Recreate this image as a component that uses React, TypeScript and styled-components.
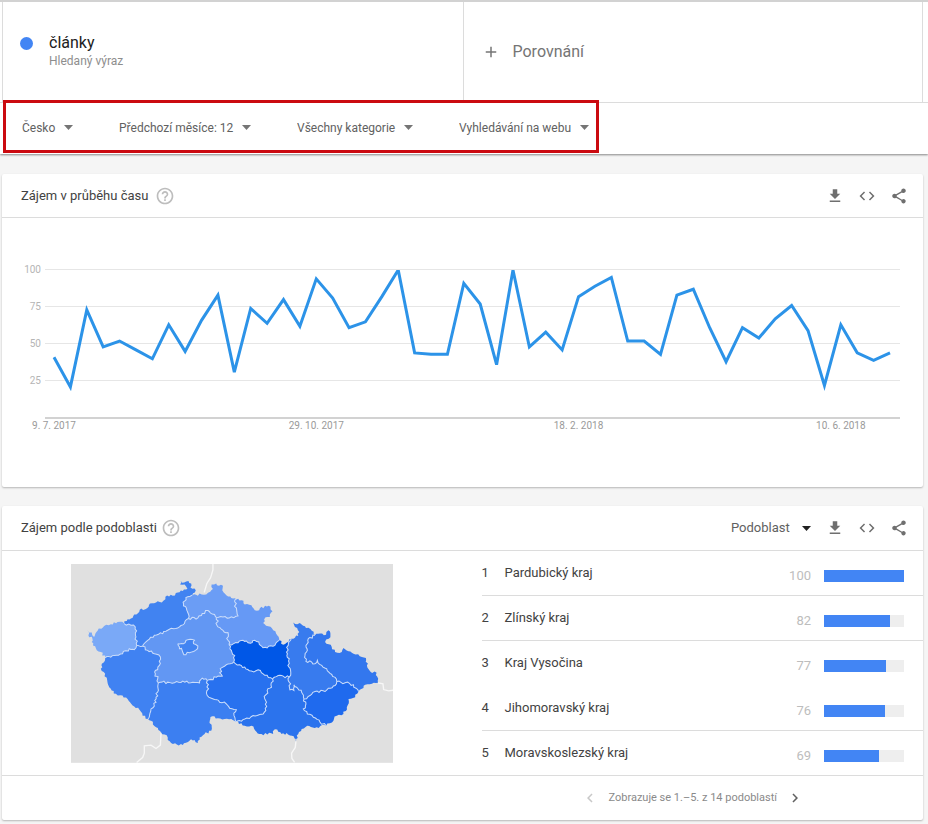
import React from "react";
import styled, { createGlobalStyle } from "styled-components";

const GlobalStyle = createGlobalStyle`
  *, *::before, *::after { box-sizing: border-box; }
  body {
    margin: 0;
    background: #f5f5f5;
    color: #424242;
    font-family: Roboto, "Liberation Sans", sans-serif;
    font-size: 13px;
    line-height: 16px;
  }
  button, select { font: inherit; color: inherit; }
`;

/* ---------- page parts ---------- */

const TopArea = styled.header`
  background: #fff;
  border-top: 2px solid #d2d2d2;
  box-shadow: 0 1px 2px rgba(0, 0, 0, 0.45);
`;

const TermRow = styled.div`
  display: grid;
  grid-template-columns: 1fr 1fr;
  padding: 0 5px 0 2px;
  border-bottom: 1px solid #dcdcdc;
`;

const Term = styled.div`
  display: flex;
  align-items: flex-start;
  gap: 16px;
  height: 100px;
  padding: 32px 17px 0;
  border-left: 1px solid #dcdcdc;
`;

const Dot = styled.span`
  width: 13px;
  height: 13px;
  margin-top: 3px;
  border-radius: 50%;
  background: #4285f4;
`;

const TermName = styled.h1`
  margin: 0;
  font-size: 16px;
  line-height: 18px;
  font-weight: 400;
  color: #212121;
`;

const TermKind = styled.p`
  margin: 0;
  font-size: 12px;
  line-height: 18px;
  color: #8e8e8e;
`;

const CompareButton = styled.button`
  display: flex;
  align-items: center;
  gap: 13px;
  height: 100px;
  padding: 0 18px;
  border: 0;
  border-left: 1px solid #dcdcdc;
  border-right: 1px solid #dcdcdc;
  background: none;
  color: #757575;
  font-size: 16px;
  cursor: pointer;
`;

const FilterBar = styled.div`
  display: flex;
  padding-left: 3px;
`;

const FilterGroup = styled.div`
  position: relative;
  display: flex;
  align-items: center;
  gap: 46px;
  height: 51px;
  padding: 0 10px 2px 19px;

  &::after {
    content: "";
    position: absolute;
    inset: -3px 0 1px;
    border: 3px solid #cb0a10;
    pointer-events: none;
  }
`;

const SelectBox = styled.label`
  display: grid;
  grid-template-columns: auto 9px;
  align-items: center;
`;

const Select = styled.select<{ $strong?: boolean }>`
  grid-area: 1 / 1 / 2 / 3;
  appearance: none;
  margin: 0;
  padding: 0 ${(p) => (p.$strong ? 21 : 17)}px 0 0;
  border: 0;
  background: none;
  color: #616161;
  font-size: ${(p) => (p.$strong ? 13 : 12)}px;
  line-height: 18px;
  cursor: pointer;
`;

const Arrow = styled.svg<{ $dark?: boolean }>`
  grid-area: 1 / 2;
  width: 9px;
  height: 5px;
  pointer-events: none;
  fill: ${(p) => (p.$dark ? "#212121" : "#757575")};
`;

const Main = styled.main`
  display: grid;
  gap: 19px;
  padding: 20px 5px 4px 2px;
`;

const Card = styled.section`
  border-radius: 2px;
  background: #fff;
  box-shadow: 0 1px 2px rgba(0, 0, 0, 0.26);
`;

const CardHead = styled.div<{ $tall?: boolean }>`
  display: flex;
  align-items: center;
  height: ${(p) => (p.$tall ? 45 : 44)}px;
  padding: 0 8px 0 19px;
  border-bottom: 1px solid #dcdcdc;
`;

const CardTitle = styled.h2`
  margin: 0;
  font-size: 13px;
  line-height: 16px;
  font-weight: 400;
  color: #424242;
`;

const IconButton = styled.button<{ $tone?: string; $size?: number }>`
  display: grid;
  place-items: center;
  width: ${(p) => p.$size ?? 32}px;
  height: ${(p) => p.$size ?? 32}px;
  padding: 0;
  border: 0;
  background: none;
  color: ${(p) => p.$tone ?? "#6f6f6f"};
  cursor: pointer;

  &:disabled { cursor: default; }
`;

const Icon = styled.svg<{ $size: number }>`
  width: ${(p) => p.$size}px;
  height: ${(p) => p.$size}px;
  fill: currentColor;
`;

const HeadActions = styled.div`
  display: flex;
  align-items: center;
  margin-left: auto;
`;

const SelectSlot = styled.div`
  margin-right: 8px;
`;

const Chart = styled.svg`
  display: block;
  width: 100%;
  height: auto;
  font-family: Roboto, "Liberation Sans", sans-serif;
  font-size: 10px;
`;

const Split = styled.div`
  display: grid;
  grid-template-columns: 1fr 1fr;
`;

const MapPane = styled.div`
  display: flex;
  justify-content: center;
  align-items: flex-start;
  padding-top: 13px;
`;

const MapSvg = styled.svg`
  width: 70%;
  min-width: 240px;
  height: auto;
`;

const Ranking = styled.ol`
  margin: 0;
  padding: 0 0 0 19px;
  list-style: none;
`;

const RankRow = styled.li<{ $line: boolean }>`
  display: grid;
  grid-template-columns: 23px 1fr auto 80px;
  align-items: center;
  height: 45px;
  padding-right: 19px;
  border-bottom: 1px solid ${(p) => (p.$line ? "#dcdcdc" : "transparent")};

  &:last-child {
    height: 44px;
    border-bottom: 0;
  }
`;

const RankValue = styled.span`
  padding: 5px 13px 0 0;
  color: #bdbdbd;
`;

const Track = styled.span`
  height: 12px;
  margin-top: 5px;
  background: #eee;
`;

const Fill = styled.span`
  display: block;
  height: 100%;
  background: #4285f4;
`;

const CardFoot = styled.div`
  display: grid;
  grid-template-columns: 1fr 1fr;
  border-top: 1px solid #dcdcdc;
`;

const Pager = styled.nav`
  grid-column: 2;
  display: flex;
  justify-content: center;
  align-items: center;
  gap: 6px;
  height: 44px;
  font-size: 11px;
  color: #8a8a8a;
`;

/* ---------- icons ---------- */

const paths = {
  plus: "M19 13h-6v6h-2v-6H5v-2h6V5h2v6h6v2z",
  help:
    "M11 18h2v-2h-2v2zm1-16C6.48 2 2 6.48 2 12s4.48 10 10 10 10-4.48 10-10S17.52 2 12 2zm0 18c-4.41 0-8-3.59-8-8s3.59-8 8-8 8 3.59 8 8-3.59 8-8 8zm0-14c-2.21 0-4 1.79-4 4h2c0-1.1.9-2 2-2s2 .9 2 2c0 2-3 1.75-3 5h2c0-2.25 3-2.5 3-5 0-2.21-1.79-4-4-4z",
  download: "M19 9h-4V3H9v6H5l7 7 7-7zM5 18v2h14v-2H5z",
  code:
    "M9.4 16.6L4.8 12l4.6-4.6L8 6l-6 6 6 6 1.4-1.4zm5.2 0l4.6-4.6-4.6-4.6L16 6l6 6-6 6-1.4-1.4z",
  share:
    "M18 16.08c-.76 0-1.44.3-1.96.77L8.91 12.7c.05-.23.09-.46.09-.7s-.04-.47-.09-.7l7.05-4.11c.54.5 1.25.81 2.04.81 1.66 0 3-1.34 3-3s-1.34-3-3-3-3 1.34-3 3c0 .24.04.47.09.7L8.04 9.81C7.5 9.31 6.79 9 6 9c-1.66 0-3 1.34-3 3s1.34 3 3 3c.79 0 1.5-.31 2.04-.81l7.12 4.16c-.05.21-.08.43-.08.65 0 1.61 1.31 2.92 2.92 2.92 1.61 0 2.92-1.31 2.92-2.92s-1.31-2.92-2.92-2.92z",
  left: "M15.41 7.41L14 6l-6 6 6 6 1.41-1.41L10.83 12z",
  right: "M10 6L8.59 7.41 13.17 12l-4.58 4.59L10 18l6-6z",
};

function Glyph({ name, size = 18 }: { name: keyof typeof paths; size?: number }) {
  return (
    <Icon $size={size} viewBox="0 0 24 24" aria-hidden="true">
      <path d={paths[name]} />
    </Icon>
  );
}

function Dropdown({
  label,
  value,
  strong = false,
}: {
  label: string;
  value: string;
  strong?: boolean;
}) {
  return (
    <SelectBox>
      <Select aria-label={label} $strong={strong} defaultValue={value}>
        <option>{value}</option>
      </Select>
      <Arrow $dark={strong} viewBox="0 0 9 5" aria-hidden="true">
        <path d="M0 0h9L4.500 5z" />
      </Arrow>
    </SelectBox>
  );
}

function CardActions() {
  return (
    <>
      <IconButton aria-label="Stáhnout">
        <Glyph name="download" />
      </IconButton>
      <IconButton aria-label="Vložit">
        <Glyph name="code" />
      </IconButton>
      <IconButton aria-label="Sdílet">
        <Glyph name="share" />
      </IconButton>
    </>
  );
}

/* ---------- interest over time ---------- */

const interest = [
  41, 21, 73, 48, 52, 46, 40, 63, 45, 66, 83, 31, 74, 64, 80, 62, 94, 81, 61, 65,
  82, 100, 44, 43, 43, 91, 77, 36, 100, 48, 58, 46, 82, 89, 95, 52, 52, 43, 83, 87,
  61, 38, 61, 54, 67, 76, 59, 22, 63, 44, 39, 44,
];

const plot = { left: 43, right: 898, top: 52, bottom: 200, first: 52, last: 888 };
const xAt = (i: number) =>
  plot.first + (i * (plot.last - plot.first)) / (interest.length - 1);
const yAt = (v: number) => plot.bottom - (v * (plot.bottom - plot.top)) / 100;

const dates: [number, string][] = [
  [0, "9. 7. 2017"],
  [16, "29. 10. 2017"],
  [32, "18. 2. 2018"],
  [48, "10. 6. 2018"],
];

function InterestChart() {
  return (
    <Chart viewBox="0 0 921 269" role="img" aria-label="Zájem v průběhu času">
      <clipPath id="plot-area">
        <rect x={plot.left} y={plot.top} width={plot.right - plot.left} height="148" />
      </clipPath>
      {[100, 75, 50, 25].map((v) => (
        <g key={v}>
          <rect x={plot.left} y={yAt(v) - 1} width={plot.right - plot.left} height="1" fill="#e6e6e6" />
          <text x="39" y={yAt(v) + 3} textAnchor="end" fill="#b5b5b5">
            {v}
          </text>
        </g>
      ))}
      <rect x={plot.left} y="199" width={plot.right - plot.left} height="2" fill="#d2d2d2" />
      <polyline
        points={interest.map((v, i) => `${xAt(i)},${yAt(v)}`).join(" ")}
        clipPath="url(#plot-area)"
        fill="none"
        stroke="#2c93e8"
        strokeWidth="3"
      />
      {dates.map(([i, text]) => (
        <text key={text} x={xAt(i)} y="211" textAnchor="middle" fill="#9a9a9a">
          {text}
        </text>
      ))}
    </Chart>
  );
}

/* ---------- map of regions ---------- */

type Point = [number, number];

/* Border lines between the points where regions meet. */
const borders: Record<string, string> = {
  AG: "195,205 205,192 215,190 225,178 240,170 246,160 258,162 268,155 272,145 290,142 312,137 318,125 340,122 355,112 370,108 384,102 380,94 362,88 364,77 374,82 387,78 395,85 393,97 405,100 406,112 398,120",
  GH: "398,120 385,125 376,137 372,152 382,165 387,190",
  GJ: "398,120 415,122 420,115 440,118 452,110 460,102 456,88 470,85 478,92 490,92 492,112 500,120 512,124 520,130 530,132",
  JI: "530,132 525,140 531,165 535,182 515,185 490,185 470,187",
  HI: "387,190 415,188 428,175 445,166 452,173 465,178 470,187",
  JO: "530,132 545,135 555,148 575,150 585,165 598,165 605,155 632,155 638,168 630,185 613,192 610,203 625,213 640,225 652,240 658,255",
  OK: "658,255 645,270 622,278 605,272 597,260 585,255 572,264 560,257 550,255 535,262 522,265 508,268",
  OP: "658,255 670,268 680,262 694,250",
  IK: "470,187 475,215 490,225 505,232 505,255 508,268",
  KL: "508,268 515,285 525,300 522,320",
  LM: "522,320 500,328 488,336 480,352 488,362 470,365 443,375",
  LR: "522,320 540,328 555,335 575,347 595,343 610,355 638,370",
  RQ: "638,370 655,360 670,362 688,365",
  PQ: "694,250 685,270 680,290 688,310 684,330 692,345 688,365",
  PS: "694,250 715,242 718,230 705,215 700,202 725,208 738,218 752,222 765,240",
  ST: "765,240 745,250 738,270 742,285 735,300 738,318 755,320 765,325 772,315 785,330 800,340 815,357 830,378",
  SV: "765,240 780,235 798,238 805,225 811,235 806,250 795,260 815,275 825,290 845,290 850,278 865,288 880,295 905,305 917,308 920,330 930,348 949,352 953,382 935,385 915,388 905,400 895,408",
  TV: "830,378 855,382 880,388 895,408",
  TU: "830,378 825,390 805,398 795,408 765,408 750,420 732,430",
  UQ: "732,430 725,410 710,395 702,388 702,405 690,403 692,385 685,375 688,365",
  VW: "895,408 885,425 865,430 860,455 850,475 830,480 820,495 798,510",
  UW: "732,430 738,445 730,460 742,475 760,485 780,500 798,510",
  WN: "798,510 770,515 742,510 725,520 715,535 708,557 702,542 680,532 665,535 645,521 640,535 605,535 590,528 575,510 555,510 528,498",
  NR: "528,498 555,490 580,480 610,475 618,465 620,440 615,430 622,405 635,395 638,370",
  MN: "443,375 447,400 443,420 465,432 480,440 500,445 510,458 530,462 523,480 528,498",
  NF: "528,498 515,490 495,490 475,488 458,482 452,490 455,525 435,535 420,545 415,562 405,553 390,555 370,568 335,562 325,545 305,530 290,515 275,495 266,490",
  FE: "266,490 275,460 290,440 290,425 297,405 297,382",
  EM: "297,382 325,380 345,382 370,377 400,380 420,382 428,368 443,375",
  CE: "250,273 265,285 285,295 303,305 300,330 288,345 288,355 295,370 297,382",
  HC: "387,190 375,205 360,215 330,222 310,235 285,240 265,255 250,273",
  BC: "232,270 250,273",
  AB: "195,205 215,210 228,215 230,245 232,270",
  BD: "232,270 225,283 210,280 190,295 165,300 138,307",
  DA: "138,307 125,290 110,278 98,260 100,250 88,240 85,225 98,232 105,245 112,230 135,212 155,207 175,200 195,205",
  DF: "138,307 128,325 125,340 138,355 145,380 155,400 170,415 190,420 205,430 220,450 240,462 250,480 266,490",
  PRAHA:
    "355,265 372,265 385,253 405,255 402,265 415,272 408,285 390,292 373,298 368,285 360,280 355,265",
};

const outer = new Set(["AG", "GJ", "JO", "OP", "PS", "SV", "VW", "WN", "NF", "DF", "DA"]);

/* Repeatable value between -1 and 1 for a place on the map. */
function noise(x: number, y: number) {
  const n = Math.sin(x * 12.9898 + y * 78.233) * 43758.5453;
  return (n - Math.floor(n)) * 2 - 1;
}

/* Breaks each straight piece into short steps so that it reads as a surveyed border. */
function roughen(text: string): Point[] {
  const pts = text.split(" ").map((p) => p.split(",").map(Number) as Point);
  const out: Point[] = [pts[0]];
  for (let i = 1; i < pts.length; i++) {
    const [ax, ay] = pts[i - 1];
    const [bx, by] = pts[i];
    const len = Math.hypot(bx - ax, by - ay);
    const steps = Math.max(1, Math.round(len / 6));
    for (let s = 1; s < steps; s++) {
      const x = ax + ((bx - ax) * s) / steps;
      const y = ay + ((by - ay) * s) / steps;
      const d = noise(x, y) * 4;
      out.push([x - ((by - ay) / len) * d, y + ((bx - ax) / len) * d]);
    }
    out.push([bx, by]);
  }
  return out;
}

const lines: Record<string, Point[]> = Object.fromEntries(
  Object.entries(borders).map(([key, text]) => [key, roughen(text)])
);

const toPoints = (pts: Point[]) =>
  pts.map(([x, y]) => `${x.toFixed(1)},${y.toFixed(1)}`).join(" ");

/* A minus sign walks the border backwards. */
const regions: { name: string; ring: string; fill: string }[] = [
  { name: "Karlovarský kraj", ring: "AB BD DA", fill: "#7aa9f7" },
  { name: "Ústecký kraj", ring: "AG GH HC -BC -AB", fill: "#4183f1" },
  { name: "Liberecký kraj", ring: "GJ JI -HI -GH", fill: "#6b9df5" },
  { name: "Královéhradecký kraj", ring: "JO OK -IK -JI", fill: "#6699f5" },
  { name: "Středočeský kraj", ring: "HI IK KL LM -EM -CE -HC", fill: "#6297f3" },
  { name: "Plzeňský kraj", ring: "BC CE -FE -DF -BD", fill: "#4082f2" },
  { name: "Jihočeský kraj", ring: "EM MN NF FE", fill: "#3c7ff1" },
  { name: "Kraj Vysočina", ring: "LR -NR -MN -LM", fill: "#2871ef" },
  { name: "Pardubický kraj", ring: "OP PQ -RQ -LR -KL -OK", fill: "#0057e7" },
  { name: "Jihomoravský kraj", ring: "RQ -UQ UW WN NR", fill: "#2b73ed" },
  { name: "Olomoucký kraj", ring: "PS ST TU UQ -PQ", fill: "#387bee" },
  { name: "Moravskoslezský kraj", ring: "SV -TV -ST", fill: "#3377ee" },
  { name: "Zlínský kraj", ring: "TV VW -UW -TU", fill: "#1f6aee" },
  { name: "Praha", ring: "PRAHA", fill: "#4284f2" },
];

function ringPoints(ring: string) {
  return toPoints(
    ring
      .split(" ")
      .flatMap((k) => (k[0] === "-" ? [...lines[k.slice(1)]].reverse() : lines[k]))
  );
}

const neighbours = [
  "460,27 460,45 453,68 442,85 434,112",
  "232,620 250,605 255,592 255,570 275,568 290,578 303,568 305,532",
  "708,557 706,575 695,592 696,608 704,620",
  "953,382 968,385 970,402 985,406 999,404",
];

function RegionMap() {
  return (
    <MapSvg viewBox="36 27 963 594" role="img" aria-label="Mapa krajů České republiky">
      <rect x="36" y="27" width="963" height="594" fill="#e0e0e0" />
      {neighbours.map((n) => (
        <polyline key={n} points={n} fill="none" stroke="#f7f7f7" strokeWidth="4" />
      ))}
      {regions.map((r) => (
        <polygon key={r.name} points={ringPoints(r.ring)} fill={r.fill}>
          <title>{r.name}</title>
        </polygon>
      ))}
      {Object.keys(lines)
        .filter((k) => !outer.has(k))
        .map((k) => (
          <polyline key={k} points={toPoints(lines[k])} fill="none" stroke="#c9dcfb" strokeWidth="3" />
        ))}
    </MapSvg>
  );
}

/* ---------- page ---------- */

const ranking = [
  { name: "Pardubický kraj", value: 100, line: true },
  { name: "Zlínský kraj", value: 82, line: true },
  { name: "Kraj Vysočina", value: 77, line: false },
  { name: "Jihomoravský kraj", value: 76, line: true },
  { name: "Moravskoslezský kraj", value: 69, line: true },
];

export default function App() {
  return (
    <>
      <GlobalStyle />
      <TopArea>
        <TermRow>
          <Term>
            <Dot />
            <div>
              <TermName>články</TermName>
              <TermKind>Hledaný výraz</TermKind>
            </div>
          </Term>
          <CompareButton>
            <Glyph name="plus" />
            Porovnání
          </CompareButton>
        </TermRow>
        <FilterBar>
          <FilterGroup>
            <Dropdown label="Země" value="Česko" />
            <Dropdown label="Období" value="Předchozí měsíce: 12" />
            <Dropdown label="Kategorie" value="Všechny kategorie" />
            <Dropdown label="Typ vyhledávání" value="Vyhledávání na webu" />
          </FilterGroup>
        </FilterBar>
      </TopArea>
      <Main>
        <Card>
          <CardHead>
            <CardTitle>Zájem v průběhu času</CardTitle>
            <IconButton aria-label="Nápověda" $tone="#bdbdbd" $size={34}>
              <Glyph name="help" size={20} />
            </IconButton>
            <HeadActions>
              <CardActions />
            </HeadActions>
          </CardHead>
          <InterestChart />
        </Card>
        <Card>
          <CardHead $tall>
            <CardTitle>Zájem podle podoblasti</CardTitle>
            <IconButton aria-label="Nápověda" $tone="#bdbdbd" $size={28}>
              <Glyph name="help" size={20} />
            </IconButton>
            <HeadActions>
              <SelectSlot>
                <Dropdown label="Úroveň oblasti" value="Podoblast" strong />
              </SelectSlot>
              <CardActions />
            </HeadActions>
          </CardHead>
          <Split>
            <MapPane>
              <RegionMap />
            </MapPane>
            <Ranking>
              {ranking.map((r, i) => (
                <RankRow key={r.name} $line={r.line}>
                  <span>{i + 1}</span>
                  <span>{r.name}</span>
                  <RankValue>{r.value}</RankValue>
                  <Track>
                    <Fill style={{ width: `${r.value}%` }} />
                  </Track>
                </RankRow>
              ))}
            </Ranking>
          </Split>
          <CardFoot>
            <Pager aria-label="Stránkování">
              <IconButton aria-label="Předchozí" $tone="#c8c8c8" $size={24} disabled>
                <Glyph name="left" />
              </IconButton>
              Zobrazuje se 1.–5. z 14 podoblastí
              <IconButton aria-label="Další" $tone="#616161" $size={24}>
                <Glyph name="right" />
              </IconButton>
            </Pager>
          </CardFoot>
        </Card>
      </Main>
    </>
  );
}
